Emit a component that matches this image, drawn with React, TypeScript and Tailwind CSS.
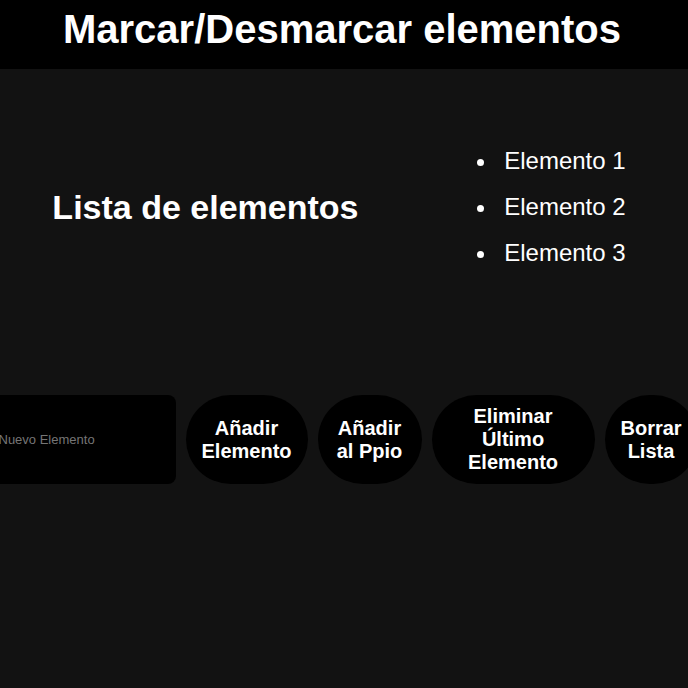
export default function App() {
  const items = ['Elemento 1', 'Elemento 2', 'Elemento 3'];

  return (
    <div className="min-h-[688px] bg-[#121212] text-white overflow-hidden font-['Liberation_Sans',Arial,sans-serif]">
      <header className="bg-black pt-[6px] pb-[17px] pr-[4px] text-center">
        <h1 className="text-[40px] leading-[46px] font-bold">Marcar/Desmarcar elementos</h1>
      </header>

      <section className="flex items-center justify-around py-[69px]">
        <h2 className="text-[34px] leading-[39px] font-bold">Lista de elementos</h2>
        <ul className="pl-[14px] pr-[10px] text-[24px]">
          {items.map((item) => (
            <li key={item} className="flex h-[46px] items-center gap-[20px]">
              <span className="mt-[3px] h-[7px] w-[7px] shrink-0 rounded-full bg-white" />
              <span>{item}</span>
            </li>
          ))}
        </ul>
      </section>

      <div className="mt-[50px] flex justify-center gap-[10px]">
        <input
          type="text"
          placeholder="Nuevo Elemento"
          className="w-[185px] shrink-0 rounded-lg bg-black px-2 text-[13px] text-white placeholder:text-[#757575] outline-none"
        />
        <button className="w-[122px] shrink-0 rounded-full bg-black px-4 py-[10px] text-[20px] font-bold leading-[23px]">
          Añadir Elemento
        </button>
        <button className="w-[104px] shrink-0 rounded-full bg-black px-4 py-[10px] text-[20px] font-bold leading-[23px]">
          Añadir al Ppio
        </button>
        <button className="w-[163px] shrink-0 rounded-full bg-black px-4 py-[10px] text-[20px] font-bold leading-[23px]">
          Eliminar Último Elemento
        </button>
        <button className="w-[93px] shrink-0 rounded-full bg-black px-4 py-[10px] text-[20px] font-bold leading-[23px]">
          Borrar Lista
        </button>
      </div>
    </div>
  );
}
